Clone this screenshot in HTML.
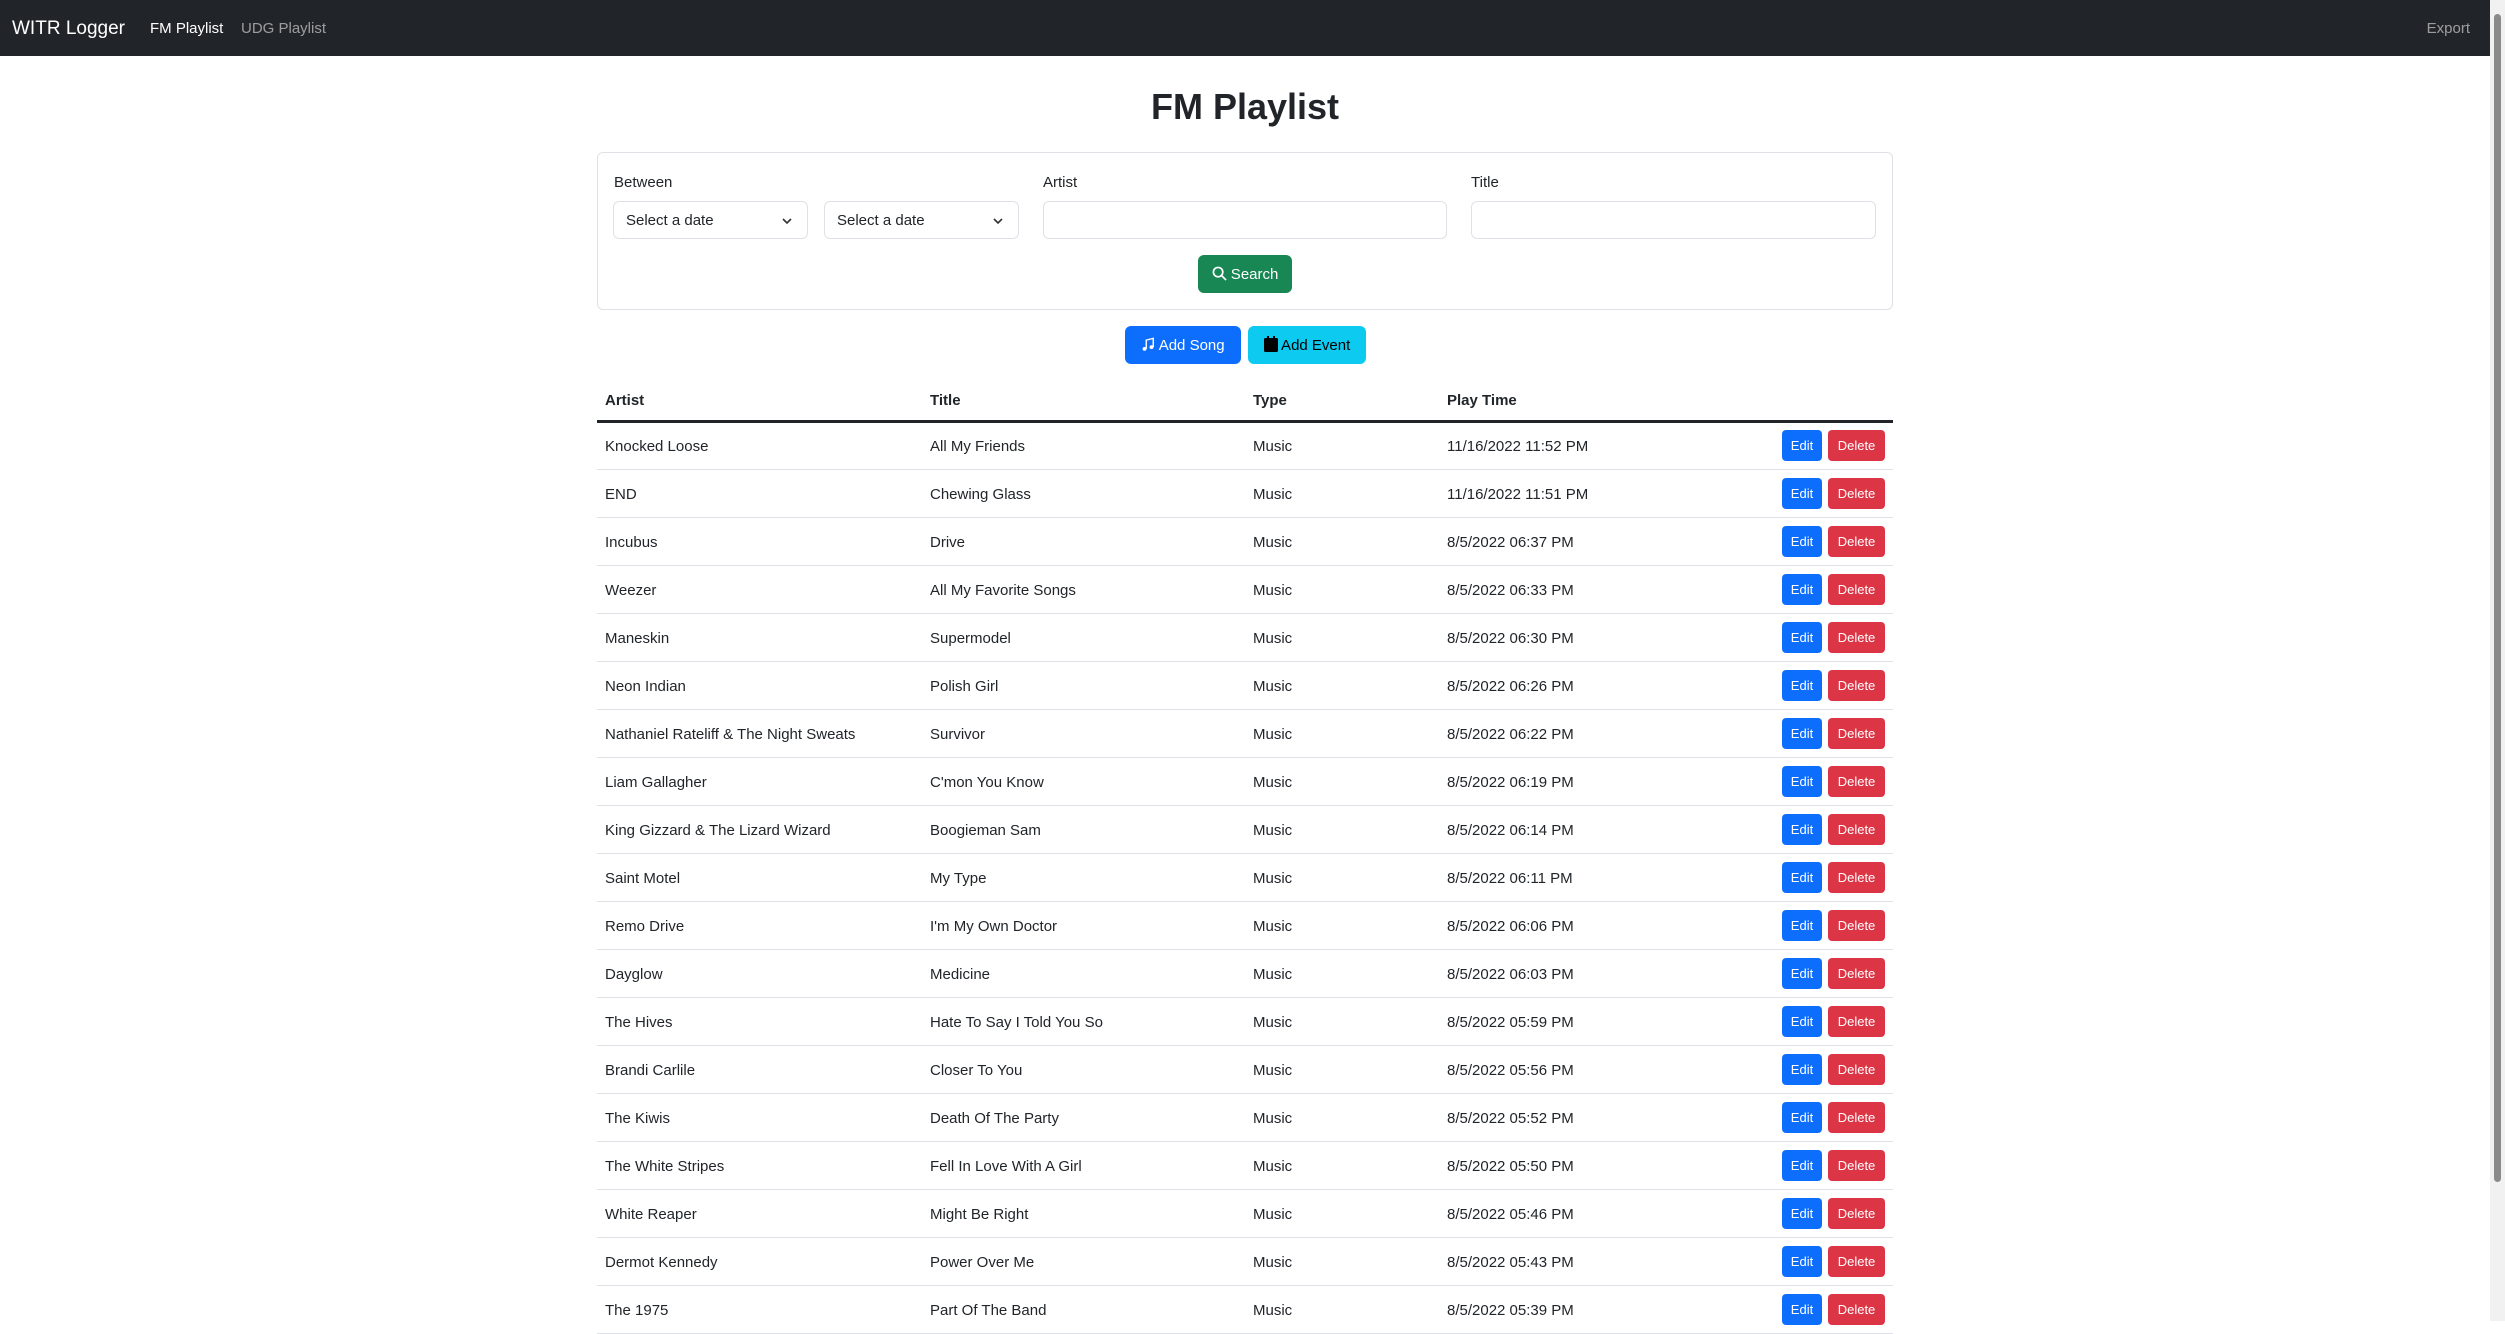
<!DOCTYPE html>
<html><head><meta charset="utf-8"><style>
*{box-sizing:border-box;margin:0;padding:0}
html,body{width:2505px;height:1321px;overflow:hidden;background:#fff;font-family:"Liberation Sans",sans-serif;color:#212529;font-size:15px}
.nav{position:absolute;left:0;top:0;width:2490px;height:56px;background:#212529}
.nav span{position:absolute;top:1px;line-height:56px}
.brand{left:12px;font-size:19px;color:#fff}
.l1{left:150px;color:#fff;font-size:15px}
.l2{left:241px;color:rgba(255,255,255,.55);font-size:15px}
.exp{right:20px;color:rgba(255,255,255,.55);font-size:15px}
h1{position:absolute;left:0;width:2490px;top:86px;text-align:center;font-size:36px;font-weight:700}
.card{position:absolute;left:597px;top:152px;width:1296px;height:158px;border:1px solid #dee2e6;border-radius:6px}
.lbl{position:absolute;top:174px;font-size:15px}
.inp{position:absolute;top:201px;height:38px;border:1px solid #dee2e6;border-radius:6px;font-size:15px;line-height:38px;padding-left:12px}
.inp svg{position:absolute;right:14px;top:13px}
.btn{position:absolute;border-radius:6px;color:#fff;font-size:15px;text-align:center}
table{position:absolute;left:597px;top:381px;width:1296px;border-collapse:collapse}
th{text-align:left;font-weight:700;padding:0 8px;height:40px;border-bottom:3px solid #212529}
td{padding:0 8px;height:48px;border-bottom:1px solid #dee2e6;padding-top:2px}
td.a{text-align:right;white-space:nowrap;padding-top:0}
.e,.d{display:inline-block;height:31px;line-height:31px;border-radius:4px;color:#fff;font-size:13px;vertical-align:middle}
.e{background:#0d6efd;width:40px;text-align:center;margin-right:6px}
.d{background:#dc3545;width:57px;text-align:center}
.sb{position:absolute;left:2490px;top:0;width:15px;height:1321px;background:#f1f1f1}
.th{position:absolute;left:2494px;top:14px;width:7px;height:1168px;background:#8a8a8a;border-radius:4px}
</style></head><body>
<div class="nav"><span class="brand">WITR Logger</span><span class="l1">FM Playlist</span><span class="l2">UDG Playlist</span><span class="exp">Export</span></div>
<h1>FM Playlist</h1>
<div class="card"></div>
<div class="lbl" style="left:614px">Between</div>
<div class="lbl" style="left:1043px">Artist</div>
<div class="lbl" style="left:1471px">Title</div>
<div class="inp" style="left:613px;width:195px">Select a date<svg width="12" height="12" viewBox="0 0 12 12"><path d="M2 4l4 4 4-4" fill="none" stroke="#333" stroke-width="1.6"/></svg></div>
<div class="inp" style="left:824px;width:195px">Select a date<svg width="12" height="12" viewBox="0 0 12 12"><path d="M2 4l4 4 4-4" fill="none" stroke="#333" stroke-width="1.6"/></svg></div>
<div class="inp" style="left:1043px;width:404px"></div>
<div class="inp" style="left:1471px;width:405px"></div>
<div class="btn" style="left:1198px;top:255px;width:94px;height:38px;line-height:39px;background:#198754"><svg width="15" height="15" viewBox="0 0 16 16" style="vertical-align:-2px"><circle cx="6.5" cy="6.5" r="5" fill="none" stroke="#fff" stroke-width="1.8"/><path d="M10.3 10.3L15 15" stroke="#fff" stroke-width="1.8"/></svg> Search</div>
<div class="btn" style="left:1125px;top:326px;width:116px;height:38px;line-height:40px;background:#0d6efd"><svg width="14" height="15" viewBox="0 0 16 16" style="vertical-align:-2px"><path d="M6 13V3l8-2v10" fill="none" stroke="#fff" stroke-width="1.6"/><circle cx="4" cy="13" r="2.2" fill="#fff"/><circle cx="12" cy="11" r="2.2" fill="#fff"/></svg> Add Song</div>
<div class="btn" style="left:1248px;top:326px;width:118px;height:38px;line-height:40px;background:#0dcaf0;color:#000"><svg width="14" height="16" viewBox="0 0 14 16" style="vertical-align:-2px"><rect x="0" y="2" width="14" height="14" rx="1.5" fill="#000"/><rect x="3" y="0" width="2" height="4" fill="#000"/><rect x="9" y="0" width="2" height="4" fill="#000"/></svg> Add Event</div>
<table>
<tr><th style="width:325px">Artist</th><th style="width:323px">Title</th><th style="width:194px">Type</th><th>Play Time</th><th></th></tr>
<tr><td>Knocked Loose</td><td>All My Friends</td><td>Music</td><td>11/16/2022 11:52 PM</td><td class="a"><span class="e">Edit</span><span class="d">Delete</span></td></tr>
<tr><td>END</td><td>Chewing Glass</td><td>Music</td><td>11/16/2022 11:51 PM</td><td class="a"><span class="e">Edit</span><span class="d">Delete</span></td></tr>
<tr><td>Incubus</td><td>Drive</td><td>Music</td><td>8/5/2022 06:37 PM</td><td class="a"><span class="e">Edit</span><span class="d">Delete</span></td></tr>
<tr><td>Weezer</td><td>All My Favorite Songs</td><td>Music</td><td>8/5/2022 06:33 PM</td><td class="a"><span class="e">Edit</span><span class="d">Delete</span></td></tr>
<tr><td>Maneskin</td><td>Supermodel</td><td>Music</td><td>8/5/2022 06:30 PM</td><td class="a"><span class="e">Edit</span><span class="d">Delete</span></td></tr>
<tr><td>Neon Indian</td><td>Polish Girl</td><td>Music</td><td>8/5/2022 06:26 PM</td><td class="a"><span class="e">Edit</span><span class="d">Delete</span></td></tr>
<tr><td>Nathaniel Rateliff &amp; The Night Sweats</td><td>Survivor</td><td>Music</td><td>8/5/2022 06:22 PM</td><td class="a"><span class="e">Edit</span><span class="d">Delete</span></td></tr>
<tr><td>Liam Gallagher</td><td>C'mon You Know</td><td>Music</td><td>8/5/2022 06:19 PM</td><td class="a"><span class="e">Edit</span><span class="d">Delete</span></td></tr>
<tr><td>King Gizzard &amp; The Lizard Wizard</td><td>Boogieman Sam</td><td>Music</td><td>8/5/2022 06:14 PM</td><td class="a"><span class="e">Edit</span><span class="d">Delete</span></td></tr>
<tr><td>Saint Motel</td><td>My Type</td><td>Music</td><td>8/5/2022 06:11 PM</td><td class="a"><span class="e">Edit</span><span class="d">Delete</span></td></tr>
<tr><td>Remo Drive</td><td>I'm My Own Doctor</td><td>Music</td><td>8/5/2022 06:06 PM</td><td class="a"><span class="e">Edit</span><span class="d">Delete</span></td></tr>
<tr><td>Dayglow</td><td>Medicine</td><td>Music</td><td>8/5/2022 06:03 PM</td><td class="a"><span class="e">Edit</span><span class="d">Delete</span></td></tr>
<tr><td>The Hives</td><td>Hate To Say I Told You So</td><td>Music</td><td>8/5/2022 05:59 PM</td><td class="a"><span class="e">Edit</span><span class="d">Delete</span></td></tr>
<tr><td>Brandi Carlile</td><td>Closer To You</td><td>Music</td><td>8/5/2022 05:56 PM</td><td class="a"><span class="e">Edit</span><span class="d">Delete</span></td></tr>
<tr><td>The Kiwis</td><td>Death Of The Party</td><td>Music</td><td>8/5/2022 05:52 PM</td><td class="a"><span class="e">Edit</span><span class="d">Delete</span></td></tr>
<tr><td>The White Stripes</td><td>Fell In Love With A Girl</td><td>Music</td><td>8/5/2022 05:50 PM</td><td class="a"><span class="e">Edit</span><span class="d">Delete</span></td></tr>
<tr><td>White Reaper</td><td>Might Be Right</td><td>Music</td><td>8/5/2022 05:46 PM</td><td class="a"><span class="e">Edit</span><span class="d">Delete</span></td></tr>
<tr><td>Dermot Kennedy</td><td>Power Over Me</td><td>Music</td><td>8/5/2022 05:43 PM</td><td class="a"><span class="e">Edit</span><span class="d">Delete</span></td></tr>
<tr><td>The 1975</td><td>Part Of The Band</td><td>Music</td><td>8/5/2022 05:39 PM</td><td class="a"><span class="e">Edit</span><span class="d">Delete</span></td></tr>
</table>
<div class="sb"></div><div class="th"></div>
</body></html>
